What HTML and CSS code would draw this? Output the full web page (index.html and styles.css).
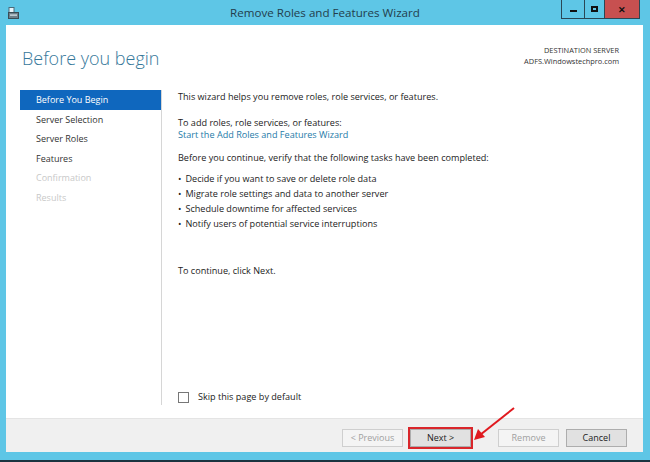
FILE: index.html
```html
<!DOCTYPE html>
<html>
	<head>
		<title>Remove Roles and Features Wizard</title>
		<meta charset="utf-8">
		<link rel="stylesheet" href="styles.css">
	</head>
	<body>
		<div class="window">
			<div class="titlebar">
				<svg class="app-icon" width="12" height="12" viewBox="0 0 12 12">
					<rect x="1" y="0.5" width="5" height="6" fill="#e8f4fa" stroke="#4a6a7a" stroke-width="1"/>
					<rect x="0.5" y="5.5" width="10" height="6" fill="#6d7f8a" stroke="#3b4b55" stroke-width="1"/>
					<rect x="2" y="7.5" width="7" height="1.2" fill="#dfe8ee"/>
				</svg>
				<div class="title">Remove Roles and Features Wizard</div>
				<div class="caption-btns">
					<div class="cbtn min"><span class="min-glyph"></span></div>
					<div class="cbtn"><span class="max-glyph"></span></div>
					<div class="cbtn close">&#x2715;</div>
				</div>
			</div>

			<div class="client">
				<div class="header">
					<h1>Before you begin</h1>
					<div class="dest">
						<div>DESTINATION SERVER</div>
						<div>ADFS.Windowstechpro.com</div>
					</div>
				</div>

				<div class="main">
					<ul class="steps">
						<li class="active">Before You Begin</li>
						<li>Server Selection</li>
						<li>Server Roles</li>
						<li>Features</li>
						<li class="off">Confirmation</li>
						<li class="off">Results</li>
					</ul>

					<div class="content">
						<p>This wizard helps you remove roles, role services, or features.</p>
						<p class="tight">To add roles, role services, or features:<br>
						<a href="#">Start the Add Roles and Features Wizard</a></p>
						<p class="lead">Before you continue, verify that the following tasks have been completed:</p>
						<ul class="tasks">
							<li>Decide if you want to save or delete role data</li>
							<li>Migrate role settings and data to another server</li>
							<li>Schedule downtime for affected services</li>
							<li>Notify users of potential service interruptions</li>
						</ul>
						<p class="next-hint">To continue, click Next.</p>

						<label class="skip"><span class="box"></span>Skip this page by default</label>
					</div>
				</div>

				<div class="footer">
					<button class="btn" disabled>&lt; Previous</button>
					<button class="btn marked">Next &gt;</button>
					<button class="btn gap" disabled>Remove</button>
					<button class="btn">Cancel</button>

					<!-- red pointer onto the Next button -->
					<svg class="arrow" width="44" height="36" viewBox="0 0 44 36">
						<line x1="42" y1="1" x2="8" y2="28" stroke="#e0191f" stroke-width="2"/>
						<polygon points="2,33 6,22 13,30" fill="#e0191f"/>
					</svg>
				</div>
			</div>
			<div class="taskbar"></div>
		</div>
	</body>
</html>
```

FILE: styles.css
```css
*{ margin:0; padding:0; box-sizing:border-box;}
body{
	width:650px;
	height:462px;
	overflow:hidden;
	font-family:"Open Sans", "Noto Sans", sans-serif;
	font-size:9px;
	color:#222;
}
.window{
	width:650px;
	height:462px;
	background:#5ec6e6;
	display:flex;
	flex-direction:column;
}

/* title bar */
.titlebar{
	height:25px;
	display:flex;
	align-items:flex-start;
	position:relative;
}
.app-icon{
	margin:7px 0 0 8px;
}
.title{
	flex:1;
	text-align:center;
	font-size:11.6px;
	line-height:25px;
	color:#233d4c;
	padding-left:68px;
}
.caption-btns{
	display:flex;
	margin-right:10px;
	height:19px;
}
.cbtn{
	width:21px;
	height:19px;
	border:1px solid #2a4755;
	border-top:none;
	margin-left:-1px;
	display:flex;
	align-items:center;
	justify-content:center;
}
.cbtn.min{
	width:24px;
}
.min-glyph{
	width:7px;
	height:2px;
	background:#111;
	margin-top:3px;
}
.max-glyph{
	width:7px;
	height:6px;
	border:2px solid #111;
}
.cbtn.close{
	width:36px;
	background:#c75050;
	color:#111;
	font-size:9px;
	font-weight:bold;
}

/* client area */
.client{
	flex:1;
	margin:0 7px 0 6px;
	background:#fff;
	display:flex;
	flex-direction:column;
}
.header{
	height:65px;
	display:flex;
	justify-content:space-between;
	padding:15px 24px 0 16px;
}
.header h1{
	font-weight:300;
	font-size:18px;
	color:#36789a;
	line-height:37px;
}
.dest{
	text-align:right;
	font-size:7.4px;
	line-height:11px;
	color:#333;
	padding-top:5px;
}

.main{
	flex:1;
	display:flex;
}
.steps{
	list-style:none;
	width:156px;
	padding-left:14px;
	border-right:1px solid #d6d6d6;
	margin-bottom:13px;
}
.steps li{
	height:19.5px;
	line-height:19.5px;
	padding-left:16px;
	color:#333;
}
.steps li.active{
	background:#0f67be;
	color:#fff;
}
.steps li.off{
	color:#c8c8c8;
}

.content{
	flex:1;
	padding:1px 0 0 16px;
	display:flex;
	flex-direction:column;
	line-height:12px;
	font-size:9.1px;
}
.content p{
	margin-bottom:14px;
}
.content p.tight{
	margin-bottom:11px;
}
.content p.lead{
	margin-bottom:7px;
}
.content a{
	color:#1e7aa8;
	text-decoration:none;
}
.tasks{
	list-style:none;
}
.tasks li{
	line-height:15px;
}
.tasks li:before{
	content:"\2022";
	margin-right:4px;
}
.next-hint{
	margin-top:34px;
}
.skip{
	margin-top:auto;
	margin-bottom:15px;
	display:flex;
	align-items:center;
}
.box{
	width:11px;
	height:11px;
	border:1px solid #777;
	margin-right:9px;
}

/* button row */
.footer{
	height:34px;
	background:#f0f0f0;
	border-top:1px solid #e4e4e4;
	display:flex;
	align-items:center;
	justify-content:flex-end;
	padding:4px 16px 0 0;
	position:relative;
}
.btn{
	width:61px;
	height:18px;
	margin-left:7px;
	font-family:inherit;
	font-size:9px;
	color:#222;
	background:#e1e1e1;
	border:1px solid #adadad;
}
.btn:disabled{
	color:#a0a0a0;
	background:#f4f4f4;
	border-color:#cfcfcf;
}
.btn.gap{
	margin-left:27px;
}
.btn.marked{
	outline:2px solid #d9262b;
	outline-offset:0;
}
.arrow{
	position:absolute;
	left:466px;
	top:-12px;
}
.taskbar{
	height:10px;
	border-bottom:2px solid #1b3440;
}
```
